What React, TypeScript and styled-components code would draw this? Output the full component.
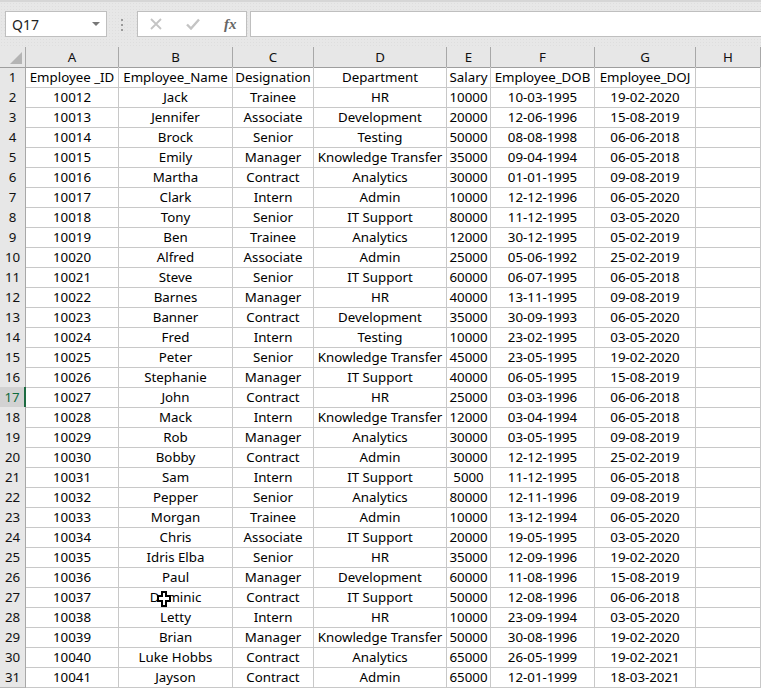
import React from "react";
import styled, { createGlobalStyle } from "styled-components";

const Global = createGlobalStyle`
  html, body { margin: 0; padding: 0; background: #fff; overflow: hidden; }
  #root { width: 761px; height: 689px; overflow: hidden; }
`;

const COLS = "26px 93px 114px 81px 133px 44px 104px 101px 65px";
const FONT = `"Noto Sans", "Open Sans", sans-serif`;

const Page = styled.div`
  width: 761px;
  height: 689px;
  overflow: hidden;
  font-family: ${FONT};
  font-size: 13.3px;
  color: #000;
`;
const FormulaBar = styled.div`
  height: 47px;
  box-sizing: border-box;
  border-top: 2px solid #d6d6d6;
  background-color: #e7e7e7;
  background-image: radial-gradient(#dedede 0.6px, transparent 0.7px);
  background-size: 3px 3px;
  display: flex;
  align-items: flex-start;
  padding: 9px 0 0 5px;
`;
const NameBox = styled.div`
  width: 102px;
  height: 26px;
  box-sizing: border-box;
  background: #fff;
  border: 1px solid #bfbfbf;
  display: flex;
  align-items: center;
  justify-content: space-between;
  padding: 0 6px 0 6px;
  font-size: 14px;
  color: #222;
`;
const Caret = styled.span`
  width: 0;
  height: 0;
  border-left: 4px solid transparent;
  border-right: 4px solid transparent;
  border-top: 4px solid #777;
`;
const Grip = styled.div`
  width: 2px;
  height: 12px;
  margin: 8px 14px 0 14px;
  background-image: repeating-linear-gradient(to bottom, #9a9a9a 0 2px, transparent 2px 5px);
`;
const ButtonBox = styled.div`
  width: 110px;
  height: 26px;
  box-sizing: border-box;
  background: #fff;
  border: 1px solid #bfbfbf;
  display: flex;
  align-items: center;
  padding-left: 12px;
  gap: 24px;
`;
const FxLabel = styled.span`
  font-family: "Liberation Serif", serif;
  font-style: italic;
  font-weight: bold;
  font-size: 15px;
  color: #666;
  line-height: 1;
`;
const FormulaInput = styled.div`
  flex: 1;
  height: 26px;
  margin-left: 3px;
  box-sizing: border-box;
  background: #fff;
  border: 1px solid #bfbfbf;
  border-right: none;
`;
const Row = styled.div`
  display: grid;
  grid-template-columns: ${COLS};
  height: 20px;
`;
const Corner = styled.div`
  background: #e7e7e7;
  border-right: 1px solid #a8a8a8;
  border-bottom: 1px solid #9e9e9e;
  box-sizing: border-box;
  position: relative;
  overflow: hidden;
  &::after {
    content: "";
    position: absolute;
    right: 3px;
    bottom: 3px;
    width: 0;
    height: 0;
    border-left: 12px solid transparent;
    border-bottom: 12px solid #b4b4b4;
  }
`;
const ColHead = styled.div`
  background: #e7e7e7;
  border-right: 1px solid #a8a8a8;
  border-bottom: 1px solid #9e9e9e;
  box-sizing: border-box;
  text-align: center;
  line-height: 20px;
  color: #111;
`;
const RowHead = styled.div<{ $active?: boolean }>`
  background: ${(p) => (p.$active ? "#d2d2d2" : "#e7e7e7")};
  color: ${(p) => (p.$active ? "#0f6b3c" : "#111")};
  border-right: ${(p) => (p.$active ? "2px solid #1d6b41" : "1px solid #a8a8a8")};
  border-bottom: 1px solid #b8b8b8;
  box-sizing: border-box;
  text-align: center;
  line-height: 20px;
`;
const Cell = styled.div`
  border-right: 1px solid #c8c8c8;
  border-bottom: 1px solid #c8c8c8;
  box-sizing: border-box;
  text-align: center;
  line-height: 20px;
  white-space: nowrap;
`;
const CursorMark = styled.svg`
  position: absolute;
  left: 157px;
  top: 591px;
`;

const header = ["Employee _ID", "Employee_Name", "Designation", "Department", "Salary", "Employee_DOB", "Employee_DOJ", ""];
const data = `10012|Jack|Trainee|HR|10000|10-03-1995|19-02-2020
10013|Jennifer|Associate|Development|20000|12-06-1996|15-08-2019
10014|Brock|Senior|Testing|50000|08-08-1998|06-06-2018
10015|Emily|Manager|Knowledge Transfer|35000|09-04-1994|06-05-2018
10016|Martha|Contract|Analytics|30000|01-01-1995|09-08-2019
10017|Clark|Intern|Admin|10000|12-12-1996|06-05-2020
10018|Tony|Senior|IT Support|80000|11-12-1995|03-05-2020
10019|Ben|Trainee|Analytics|12000|30-12-1995|05-02-2019
10020|Alfred|Associate|Admin|25000|05-06-1992|25-02-2019
10021|Steve|Senior|IT Support|60000|06-07-1995|06-05-2018
10022|Barnes|Manager|HR|40000|13-11-1995|09-08-2019
10023|Banner|Contract|Development|35000|30-09-1993|06-05-2020
10024|Fred|Intern|Testing|10000|23-02-1995|03-05-2020
10025|Peter|Senior|Knowledge Transfer|45000|23-05-1995|19-02-2020
10026|Stephanie|Manager|IT Support|40000|06-05-1995|15-08-2019
10027|John|Contract|HR|25000|03-03-1996|06-06-2018
10028|Mack|Intern|Knowledge Transfer|12000|03-04-1994|06-05-2018
10029|Rob|Manager|Analytics|30000|03-05-1995|09-08-2019
10030|Bobby|Contract|Admin|30000|12-12-1995|25-02-2019
10031|Sam|Intern|IT Support|5000|11-12-1995|06-05-2018
10032|Pepper|Senior|Analytics|80000|12-11-1996|09-08-2019
10033|Morgan|Trainee|Admin|10000|13-12-1994|06-05-2020
10034|Chris|Associate|IT Support|20000|19-05-1995|03-05-2020
10035|Idris Elba|Senior|HR|35000|12-09-1996|19-02-2020
10036|Paul|Manager|Development|60000|11-08-1996|15-08-2019
10037|Dominic|Contract|IT Support|50000|12-08-1996|06-06-2018
10038|Letty|Intern|HR|10000|23-09-1994|03-05-2020
10039|Brian|Manager|Knowledge Transfer|50000|30-08-1996|19-02-2020
10040|Luke Hobbs|Contract|Analytics|65000|26-05-1999|19-02-2021
10041|Jayson|Contract|Admin|65000|12-01-1999|18-03-2021`
  .split("\n")
  .map((l) => [...l.split("|"), ""]);

export default function App() {
  return (
    <Page>
      <Global />
      <FormulaBar>
        <NameBox>
          Q17
          <Caret />
        </NameBox>
        <Grip />
        <ButtonBox>
          <svg width="12" height="12" viewBox="0 0 12 12">
            <path d="M1 1L11 11M11 1L1 11" stroke="#c4c4c4" strokeWidth="1.8" fill="none" />
          </svg>
          <svg width="14" height="12" viewBox="0 0 14 12">
            <path d="M1 6.5L5 10.5L13 1.5" stroke="#c4c4c4" strokeWidth="2.4" fill="none" />
          </svg>
          <FxLabel>fx</FxLabel>
        </ButtonBox>
        <FormulaInput />
      </FormulaBar>
      <Row>
        <Corner />
        {["A", "B", "C", "D", "E", "F", "G", "H"].map((c) => (
          <ColHead key={c}>{c}</ColHead>
        ))}
      </Row>
      <Row>
        <RowHead>1</RowHead>
        {header.map((h, i) => (
          <Cell key={i}>{h}</Cell>
        ))}
      </Row>
      {data.map((r, i) => (
        <Row key={i}>
          <RowHead $active={i + 2 === 17}>{i + 2}</RowHead>
          {r.map((v, j) => (
            <Cell key={j}>{v}</Cell>
          ))}
        </Row>
      ))}
      <CursorMark width="14" height="16" viewBox="0 0 14 16">
        <path d="M5 1H9V5H13V10H9V15H5V10H1V5H5Z" fill="#fff" stroke="#000" strokeWidth="2" />
      </CursorMark>
    </Page>
  );
}
